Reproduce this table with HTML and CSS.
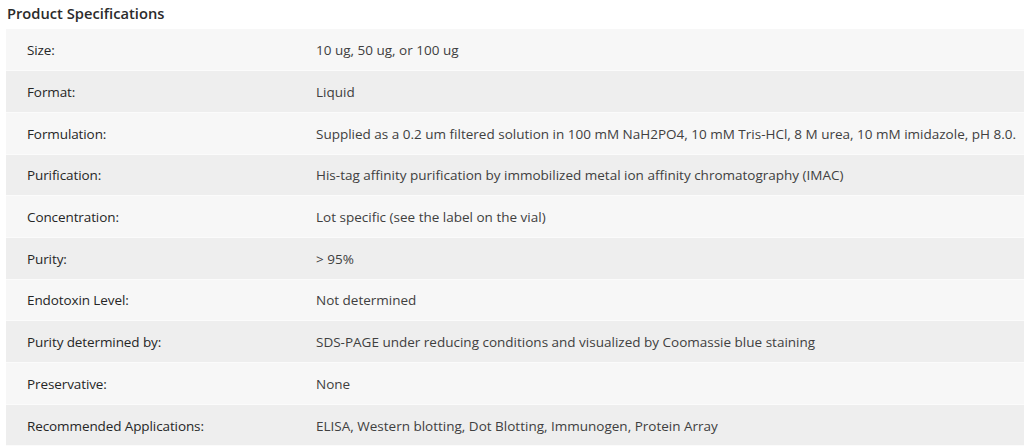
FILE: index.html
```html
<!DOCTYPE html>
<html>
<head>
<meta charset="utf-8">
<link rel="stylesheet" href="styles.css">
</head>
<body>
<div class="specs">
  <h2 class="specs-title">Product Specifications</h2>
  <table class="specs-table">
    <tr><th>Size:</th><td>10 ug, 50 ug, or 100 ug</td></tr>
    <tr><th>Format:</th><td>Liquid</td></tr>
    <tr><th>Formulation:</th><td>Supplied as a 0.2 um filtered solution in 100 mM NaH2PO4, 10 mM Tris-HCl, 8 M urea, 10 mM imidazole, pH 8.0.</td></tr>
    <tr><th>Purification:</th><td>His-tag affinity purification by immobilized metal ion affinity chromatography (IMAC)</td></tr>
    <tr><th>Concentration:</th><td>Lot specific (see the label on the vial)</td></tr>
    <tr><th>Purity:</th><td>&gt; 95%</td></tr>
    <tr><th>Endotoxin Level:</th><td>Not determined</td></tr>
    <tr><th>Purity determined by:</th><td>SDS-PAGE under reducing conditions and visualized by Coomassie blue staining</td></tr>
    <tr><th>Preservative:</th><td>None</td></tr>
    <tr><th>Recommended Applications:</th><td>ELISA, Western blotting, Dot Blotting, Immunogen, Protein Array</td></tr>
  </table>
</div>
</body>
</html>
```
FILE: styles.css
```css
html, body {
  margin: 0;
  padding: 0;
  background: #ffffff;
}
body {
  font-family: "Open Sans", "Liberation Sans", sans-serif;
  color: #333;
  overflow: hidden;
}
.specs {
  padding-left: 6px;
}
.specs-title {
  margin: 0;
  height: 29px;
  line-height: 27px;
  font-size: 14.7px;
  font-weight: 600;
  color: #2b2b2b;
  padding-left: 1px;
}
.specs-table {
  width: 1030px;
  border-collapse: collapse;
}
.specs-table tr {
  height: 41.7px;
  background: #f7f7f7;
  border-bottom: 1px solid #fbfbfb;
}
.specs-table tr:nth-child(even) {
  background: #eeeeee;
}
.specs-table th,
.specs-table td {
  padding: 0;
  padding-top: 1px;
  text-align: left;
  vertical-align: middle;
  font-size: 13.5px;
  white-space: nowrap;
}
.specs-table th {
  width: 289px;
  padding-left: 21px;
  font-weight: 500;
  letter-spacing: -0.1px;
  color: #262626;
}
.specs-table td {
  font-weight: 400;
  color: #404040;
}
```
